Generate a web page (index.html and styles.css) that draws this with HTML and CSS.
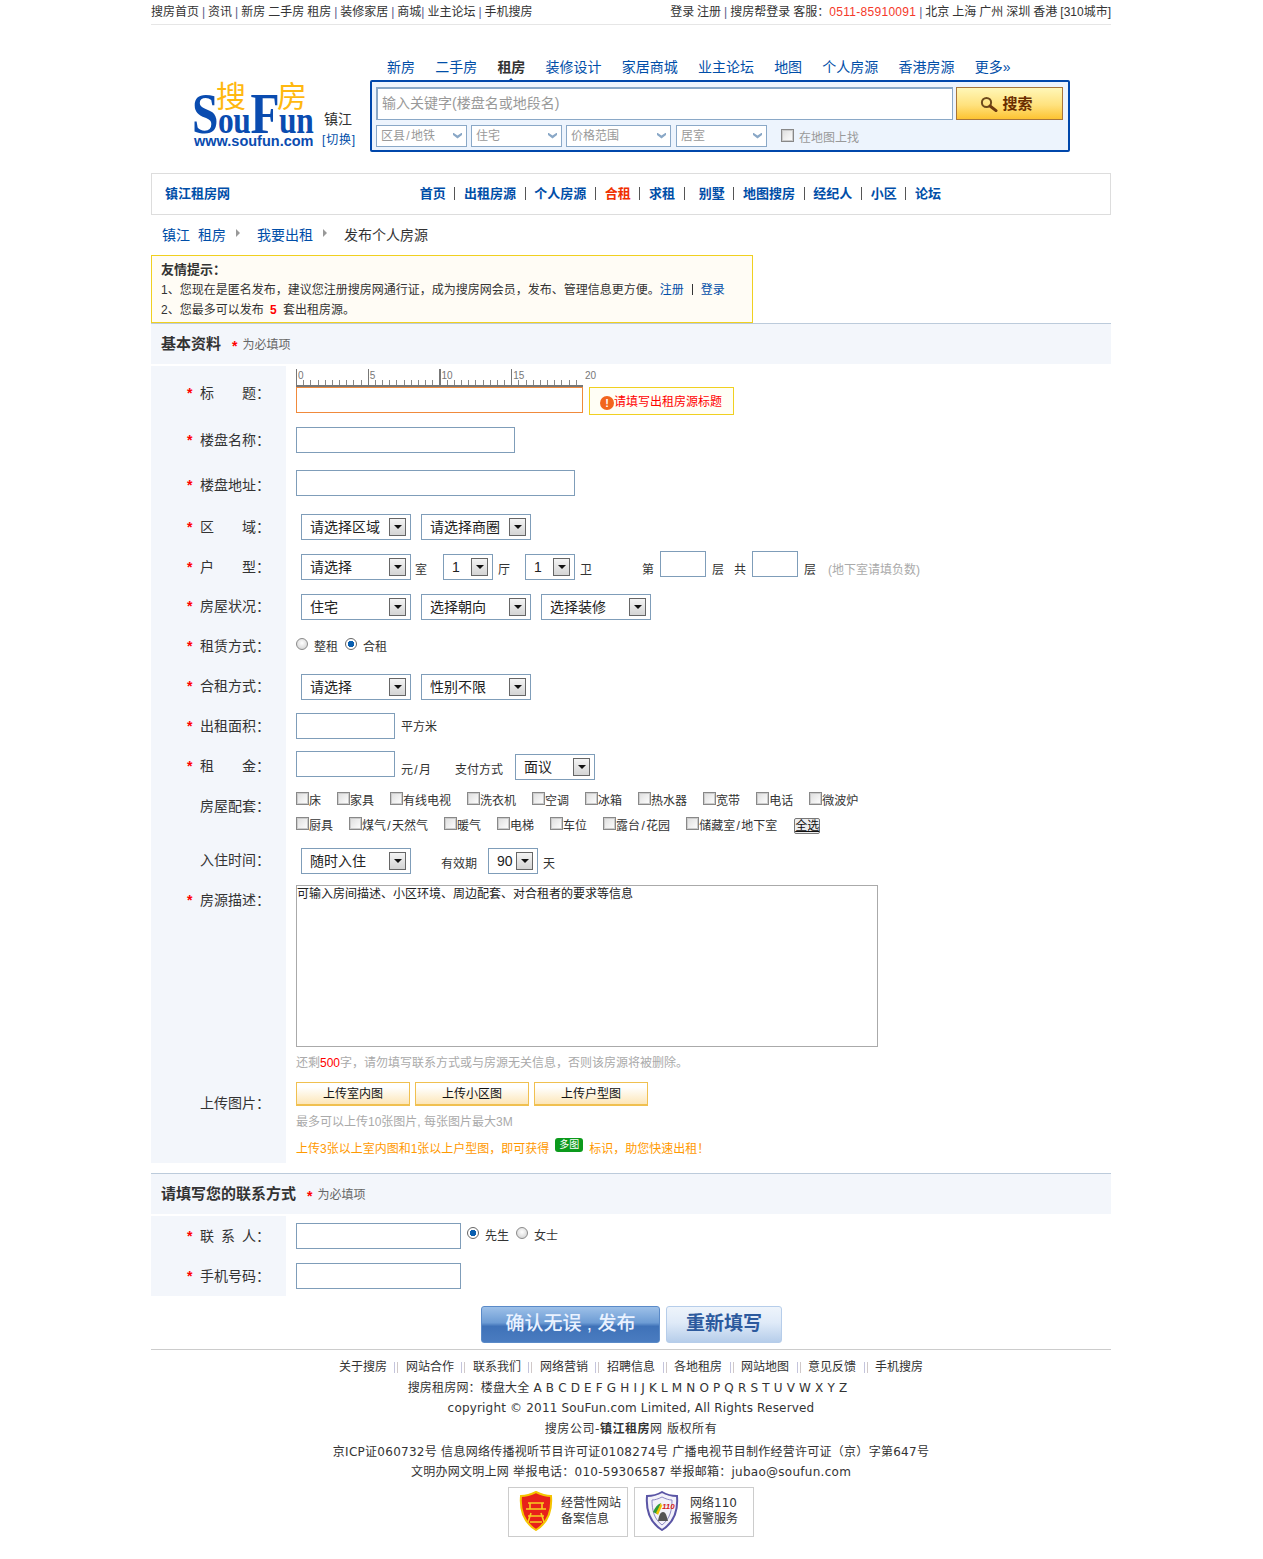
FILE: index.html
```html
<!DOCTYPE html>
<html lang="zh-CN">
<head>
<meta charset="utf-8">
<title>发布个人房源</title>
<link rel="stylesheet" href="styles.css">
</head>
<body>
<div class="page">
  <div class="top">
    <div>搜房首页 <b>|</b> 资讯 <b>|</b> 新房 二手房 租房 <b>|</b> 装修家居 <b>|</b> 商城<b>|</b> 业主论坛 <b>|</b> 手机搜房</div>
    <div>登录 注册 <b>|</b> 搜房帮登录 客服：<span class="phone">0511-85910091</span> <b>|</b> 北京 上海 广州 深圳 香港 [310城市]</div>
  </div>

  <div class="head">
    <div class="logobox">
      <div class="logo">
        <span class="lg-a">搜</span><span class="lg-b">房</span>
        <div class="lg-name"><span class="big">S</span>ou<span class="big">F</span>un</div>
        <div class="lg-url">www.soufun.com</div>
      </div>
      <div class="city"><span>镇江</span><a>[切换]</a></div>
    </div>
    <div class="searchcol">
      <div class="tabs">
        <a>新房</a><a>二手房</a><a class="on">租房</a><a>装修设计</a><a>家居商城</a><a>业主论坛</a><a>地图</a><a>个人房源</a><a>香港房源</a><a>更多»</a>
      </div>
      <div class="sbox">
        <div class="sline">
          <div class="kw">输入关键字(楼盘名或地段名)</div>
          <div class="sbtn">
            <svg width="18" height="16" viewBox="0 0 18 16"><circle cx="6.5" cy="6.5" r="4.6" fill="none" stroke="#6d4a1c" stroke-width="2"/><path d="M10 10l6 4.6" stroke="#6d3a10" stroke-width="3" stroke-linecap="round"/></svg>
            <span>搜索</span>
          </div>
        </div>
        <div class="sline2">
          <div class="ssel w91">区县<span class="sl">/</span>地铁<i></i></div>
          <div class="ssel w91">住宅<i></i></div>
          <div class="ssel w105">价格范围<i></i></div>
          <div class="ssel w91 mg">居室<i></i></div>
          <label class="onmap"><input type="checkbox" class="cb">在地图上找</label>
        </div>
      </div>
    </div>
  </div>

  <div class="subnav">
    <a class="sn-title">镇江租房网</a>
    <div class="sn-links">
      <a>首页</a><a>出租房源</a><a>个人房源</a><a class="red">合租</a><a>求租</a><a class="wide">别墅</a><a>地图搜房</a><a>经纪人</a><a>小区</a><a>论坛</a>
    </div>
  </div>

  <div class="crumb"><a>镇江</a><a class="c2">租房</a><i></i><a>我要出租</a><i></i><span>发布个人房源</span></div>

  <div class="notice">
    <p class="nt">友情提示：</p>
    <p>1、您现在是匿名发布，建议您注册搜房网通行证，成为搜房网会员，发布、管理信息更方便。<a>注册</a><span class="nbar"></span><a>登录</a></p>
    <p>2、您最多可以发布 <strong>5</strong> 套出租房源。</p>
  </div>

  <div class="sec"><h2>基本资料</h2><em>*</em><span>为必填项</span></div>

  <div class="form">
    <div class="row h51">
      <div class="lab dn2"><em>*</em>标　　题：</div>
      <div class="val top-v">
        <div class="titlewrap">
          <div class="ruler"><span>0</span><span>5</span><span>10</span><span>15</span><span>20</span></div>
          <div class="tin"></div>
        </div>
        <div class="tip"><i>!</i>请填写出租房源标题</div>
      </div>
    </div>
    <div class="row h46">
      <div class="lab dn"><em>*</em>楼盘名称：</div>
      <div class="val"><input class="in w219"></div>
    </div>
    <div class="row h44">
      <div class="lab dn"><em>*</em>楼盘地址：</div>
      <div class="val"><input class="in w279 lift4"></div>
    </div>
    <div class="row">
      <div class="lab dn"><em>*</em>区　　域：</div>
      <div class="val sels"><div class="sel w110">请选择区域<i></i></div><div class="sel w110">请选择商圈<i></i></div></div>
    </div>
    <div class="row">
      <div class="lab dn"><em>*</em>户　　型：</div>
      <div class="val sels">
        <div class="sel w110 n4">请选择<i></i></div><span class="u ml4">室</span>
        <div class="sel w50 n15 first">1<i></i></div><span class="u ml5">厅</span>
        <div class="sel w50 n15">1<i></i></div><span class="u ml5">卫</span>
        <span class="u ml50">第</span><input class="in w46 lift ml6">
        <span class="u ml6">层</span><span class="u ml10">共</span><input class="in w46 lift ml6">
        <span class="u ml6">层</span><span class="u ml12 gray">(地下室请填负数)</span>
      </div>
    </div>
    <div class="row">
      <div class="lab"><em>*</em>房屋状况：</div>
      <div class="val sels"><div class="sel w110">住宅<i></i></div><div class="sel w110">选择朝向<i></i></div><div class="sel w110">选择装修<i></i></div></div>
    </div>
    <div class="row">
      <div class="lab"><em>*</em>租赁方式：</div>
      <div class="val radios">
        <input type="radio" name="a" class="ra"><span>整租</span>
        <input type="radio" name="a" class="ra" checked><span>合租</span>
      </div>
    </div>
    <div class="row">
      <div class="lab"><em>*</em>合租方式：</div>
      <div class="val sels"><div class="sel w110">请选择<i></i></div><div class="sel w110">性别不限<i></i></div></div>
    </div>
    <div class="row">
      <div class="lab"><em>*</em>出租面积：</div>
      <div class="val"><input class="in w99 lift2"><span class="ml6">平方米</span></div>
    </div>
    <div class="row">
      <div class="lab"><em>*</em>租　　金：</div>
      <div class="val"><input class="in w99 lift"><span class="u ml6">元<span class="sl">/</span>月</span><span class="u ml24">支付方式</span><div class="sel w80 ml12">面议<i></i></div></div>
    </div>
    <div class="row h54">
      <div class="lab topl"><em class="blank"></em>房屋配套：</div>
      <div class="val cbs">
        <div class="cbrow">
          <label><input type="checkbox" class="cb">床</label><label><input type="checkbox" class="cb">家具</label><label><input type="checkbox" class="cb">有线电视</label><label><input type="checkbox" class="cb">洗衣机</label><label><input type="checkbox" class="cb">空调</label><label><input type="checkbox" class="cb">冰箱</label><label><input type="checkbox" class="cb">热水器</label><label><input type="checkbox" class="cb">宽带</label><label><input type="checkbox" class="cb">电话</label><label><input type="checkbox" class="cb">微波炉</label>
        </div>
        <div class="cbrow">
          <label><input type="checkbox" class="cb">厨具</label><label><input type="checkbox" class="cb">煤气<span class="sl">/</span>天然气</label><label><input type="checkbox" class="cb">暖气</label><label><input type="checkbox" class="cb">电梯</label><label><input type="checkbox" class="cb">车位</label><label><input type="checkbox" class="cb">露台<span class="sl">/</span>花园</label><label><input type="checkbox" class="cb">储藏室<span class="sl">/</span>地下室</label><span class="allbtn">全选</span>
        </div>
      </div>
    </div>
    <div class="row">
      <div class="lab"><em class="blank"></em>入住时间：</div>
      <div class="val sels"><div class="sel w110">随时入住<i></i></div><span class="u ml20">有效期</span><div class="sel w50 ml11 n90">90<i></i></div><span class="u ml5">天</span></div>
    </div>
    <div class="row desc">
      <div class="lab up2"><em>*</em>房源描述：</div>
      <div class="val col">
        <textarea class="ta" readonly>可输入房间描述、小区环境、周边配套、对合租者的要求等信息</textarea>
        <p class="hint">还剩<span>500</span>字，请勿填写联系方式或与房源无关信息，否则该房源将被删除。</p>
      </div>
    </div>
    <div class="row upl">
      <div class="lab up3"><em class="blank"></em>上传图片：</div>
      <div class="val col">
        <div class="ubtns"><span>上传室内图</span><span>上传小区图</span><span>上传户型图</span></div>
        <p class="hint h2">最多可以上传10张图片, 每张图片最大3M</p>
        <p class="promo">上传3张以上室内图和1张以上户型图，即可获得<span class="duotu">多图</span>标识，助您快速出租！</p>
      </div>
    </div>
  </div>

  <div class="sec sec2"><h2>请填写您的联系方式</h2><em>*</em><span>为必填项</span></div>
  <div class="form">
    <div class="row">
      <div class="lab dn"><em>*</em>联&ensp;系&ensp;人：</div>
      <div class="val radios"><input class="in w165 mr6"><input type="radio" name="g" class="ra" checked><span>先生</span><input type="radio" name="g" class="ra"><span>女士</span></div>
    </div>
    <div class="row">
      <div class="lab dn"><em>*</em>手机号码：</div>
      <div class="val"><input class="in w165"></div>
    </div>
  </div>

  <div class="actions"><a class="go">确认无误 , 发布</a><a class="reset">重新填写</a></div>

  <div class="foot">
    <div class="fl links"><a>关于搜房</a><i></i><a>网站合作</a><i></i><a>联系我们</a><i></i><a>网络营销</a><i></i><a>招聘信息</a><i></i><a>各地租房</a><i></i><a>网站地图</a><i></i><a>意见反馈</a><i></i><a>手机搜房</a></div>
    <div class="fl az">搜房租房网：楼盘大全 A B C D E F G H I J K L M N O P Q R S T U V W X Y Z</div>
    <div class="fl ls18">copyright © 2011 SouFun.com Limited, All Rights Reserved</div>
    <div class="fl ls55">搜房公司-<b>镇江租房</b>网 版权所有</div>
    <div class="fl ls lic">京ICP证060732号 信息网络传播视听节目许可证0108274号 广播电视节目制作经营许可证（京）字第647号</div>
    <div class="fl ls">文明办网文明上网 举报电话：010-59306587 举报邮箱：jubao@soufun.com</div>
    <div class="badges">
      <div class="badge">
        <svg width="34" height="40" viewBox="0 0 34 40"><path d="M17 1C11 4 6 5 2 5c-1 12 2 26 15 34C30 31 33 17 32 5c-4 0-9-1-15-4z" fill="#e8211a" stroke="#f5c400" stroke-width="2"/><path d="M9 12h16M7 18h20M11 12v6M23 12v6M9 25h16M12 22l-3 9M22 22l3 9M11 31h12" fill="none" stroke="#f5d020" stroke-width="1.6"/></svg>
        <div>经营性网站<br>备案信息</div>
      </div>
      <div class="badge b2">
        <svg width="34" height="40" viewBox="0 0 34 40"><path d="M17 1C12 4 6 5 2 5c-1 12 2 26 15 34C30 31 33 17 32 5c-4 0-10-1-15-4z" fill="#f3f2fa" stroke="#5a55a5" stroke-width="2"/><path d="M17 6c-4 2-7 3-10 3 0 10 2 19 10 25 8-6 10-15 10-25-3 0-6-1-10-3z" fill="none" stroke="#8d88c4"/><path d="M8 21c2-5 5-8 8-9l-4 11z" fill="#2f9a3a"/><path d="M11 22l5-10 1 3-4 9z" fill="#f2c200"/><path d="M13 30c1-5 2-9 5-9s4 5 5 9z" fill="#555"/><text x="17" y="18" class="t110">110</text></svg>
        <div>网络110<br>报警服务</div>
      </div>
    </div>
  </div>
</div>
</body>
</html>
```

FILE: styles.css
```css
* { box-sizing: border-box; }
html, body { margin: 0; padding: 0; background: #fff; }
body { font: 12px/20px "Liberation Sans", "Noto Sans CJK SC", sans-serif; color: #333; }
a { color: #004ea8; text-decoration: none; }
p, h2 { margin: 0; }
em, i { font-style: normal; }
.page { width: 960px; margin: 0 auto; position: relative; left: -.5px; height: 1559px; }
.sl { display: inline-block; width: 6px; text-align: center; }

.top { height: 25px; padding-top: 2px; display: flex; justify-content: space-between; border-bottom: 1px solid #e6e6e6; word-spacing: -.35px; }
.top b { font-weight: normal; color: #5a5a8a; }
.phone { color: #f5392a; letter-spacing: .3px; }

.head { height: 148px; display: flex; }
.logobox { width: 219px; position: relative; }
.logo { position: absolute; left: 42px; top: 55px; width: 125px; height: 70px; }
.lg-a, .lg-b { position: absolute; color: #ffb80f; font: 30px/32px "Noto Sans CJK SC", sans-serif; }
.lg-a { left: 23px; top: -2px; z-index: 1; }
.lg-b { left: 84px; top: -2px; z-index: 1; }
.lg-name { position: absolute; left: -1px; top: 12px; width: 150px; transform: scaleX(.85); transform-origin: left; font: bold 37px/44px "Liberation Serif", serif; color: #0a4cb0; white-space: nowrap; letter-spacing: -.5px; }
.lg-name .big { font-size: 56px; }
.lg-url { position: absolute; left: 1px; top: 53px; font: bold 14.5px/16px "Liberation Sans", sans-serif; color: #0a4cb0; white-space: nowrap; }
.city { position: absolute; left: 171px; top: 84px; width: 40px; display: flex; flex-direction: column; }
.city span { font-size: 14px; padding-left: 2px; line-height: 20px; }
.city a { line-height: 20px; margin-top: 1px; letter-spacing: .8px; white-space: nowrap; }

.searchcol { width: 700px; }
.tabs { height: 55px; padding: 32px 0 0 17px; display: flex; gap: 20.2px; font-size: 14px; line-height: 20px; white-space: nowrap; }
.tabs a.on { color: #333; font-weight: bold; position: relative; }
.tabs a.on::after { content: ""; position: absolute; left: 50%; margin-left: -4px; top: 21px; border: 4px solid transparent; border-top: 0; border-bottom-color: #0047ab; }
.sbox { height: 72px; border: 2px solid #0047ab; border-radius: 2px; background: #edf4fd; padding: 5px 5px 0 4px; }
.sline { display: flex; gap: 3px; }
.kw { width: 577px; height: 33px; border: 1px solid #8aa8c7; border-top-width: 2px; border-left-width: 2px; background: #fff; color: #999; font-size: 14px; line-height: 28px; padding-left: 4px; }
.sbtn { width: 107px; height: 33px; border: 1px solid #a8753a; background: linear-gradient(#fff7b8, #ffe27e 55%, #fdc332); display: flex; align-items: center; justify-content: center; gap: 4px; padding-right: 6px; color: #6a2e00; font-size: 15px; font-weight: bold; }
.sline2 { display: flex; margin-top: 3px; align-items: center; }
.ssel { height: 22px; border: 1px solid #8aa8c7; background: #fff; color: #999; line-height: 20px; padding-left: 4px; margin-right: 4px; position: relative; }
.ssel i { position: absolute; right: 4px; top: 7px; width: 9px; height: 6px; background: #8aa8c7; clip-path: polygon(0 0, 50% 50%, 100% 0, 100% 40%, 50% 100%, 0 40%); }
.w91 { width: 91px; } .w105 { width: 105px; }
.mg { margin-left: 1px; }
.onmap { display: flex; align-items: center; gap: 5px; color: #999; margin: 5px 0 0 10px; }

.subnav { height: 42px; border: 1px solid #ddd; display: flex; align-items: center; padding-left: 13px; font-size: 13px; font-weight: bold; }
.sn-title { width: 246px; }
.sn-links { display: flex; align-items: center; margin-top: -1px; }
.sn-links a { padding: 0 8.66px; line-height: 13px; border-left: 1px solid #555; white-space: nowrap; }
.sn-links a:first-child { border-left: 0; }
.sn-links a.red { color: #f03000; }
.sn-links a.wide { padding-left: 14px; }

.crumb { height: 40px; padding-left: 11px; display: flex; align-items: center; font-size: 14px; }
.crumb a.c2 { margin-left: 8px; }
.crumb i { margin: -4px 17px 0 10px; border: 4px solid transparent; border-right: 0; border-left-color: #999; }

.notice { width: 602px; height: 68px; border: 1px solid #f0d020; background: #fffcf5; padding: 4px 0 0 9px; line-height: 20px; position: relative; z-index: 1; }
.notice .nt { font-weight: bold; font-size: 13px; }
.notice strong { color: #f00; margin: 0 3px; }
.nbar { display: inline-block; width: 1px; height: 11px; background: #333; margin: 0 8px; vertical-align: -1px; }

.sec { height: 41px; border-top: 1px solid #bccbdb; background: #f3f6fb; display: flex; align-items: center; padding-left: 10px; margin-bottom: 2px; }
.sec h2 { font-size: 15px; color: #333; }
.sec em { color: #f00; font-size: 14px; font-weight: bold; margin: 3px 5px 0 11px; }
.sec span { color: #666; margin-top: 1px; }
.sec2 { margin-top: 10px; }

.row { display: flex; height: 40px; }
.h51 { height: 51px; } .h46 { height: 46px; } .h44 { height: 44px; } .h54 { height: 54px; }
.lab { width: 135px; flex: none; background: #f3f6fb; padding: 0 0 2px 36px; display: flex; align-items: center; font-size: 14px; white-space: nowrap; }
.lab em { width: 13px; color: #f00; font-size: 14px; font-weight: bold; }
.lab .blank { display: block; }
.lab.dn { padding-bottom: 0; }
.lab.dn2 { padding: 2px 0 0 36px; }
.lab.topl { align-items: flex-start; padding-top: 9px; }
.lab.up2 { align-items: flex-start; padding-top: 9px; }
.lab.up3 { align-items: flex-start; padding-top: 18px; }
.val { flex: 1; padding-left: 10px; display: flex; align-items: center; min-width: 0; white-space: nowrap; }
.top-v { align-items: flex-start; }
.col { flex-direction: column; align-items: flex-start; }

.titlewrap { width: 287px; padding-top: 3px; }
.ruler { height: 18px; width: 287px; display: flex; border-bottom: 2px solid #777; font-size: 10px; line-height: 14px; color: #777; padding-left: 2px;
  background: repeating-linear-gradient(90deg, #777 0 1px, transparent 1px 71.75px) 0 0 / 100% 100% no-repeat, repeating-linear-gradient(90deg, #888 0 1px, transparent 1px 7.175px) 0 100% / 100% 5px no-repeat; }
.ruler span { flex: 0 0 71.75px; }
.ruler span:last-child { flex: 0 0 0; }
.tin { height: 26px; border: 1px solid #f08a3c; background: #fff; }
.tip { margin: 21px 0 0 6px; width: 145px; height: 28px; border: 1px solid #f0d020; background: #fffef5; color: #f00; display: flex; align-items: center; padding: 1px 0 0 10px; }
.tip i { width: 14px; height: 14px; border-radius: 50%; background: #f2651d; color: #fff; font: bold 11px/14px "Liberation Sans", sans-serif; text-align: center; margin-top: 2px; }

.in { height: 26px; border: 1px solid #7f9db9; background: #fff; padding: 0; margin: 0; display: block; outline: 0; }
.w219 { width: 219px; } .w279 { width: 279px; } .w46 { width: 46px; } .w99 { width: 99px; } .w165 { width: 165px; }
.lift { margin-top: -6px; }
.lift2 { margin-top: -2px; }
.lift4 { margin-top: -4px; }

.sels { padding-left: 15px; }
.sel { height: 26px; border: 1px solid #7f9db9; background: #fff; font-size: 14px; line-height: 24px; color: #222; padding-left: 8px; position: relative; margin-right: 10px; flex: none; }
.sel i { position: absolute; right: 4px; top: 3px; width: 17px; height: 18px; border: 1px solid #666; background: linear-gradient(#f4f4f4, #d4d4d4); }
.sel i::after { content: ""; position: absolute; left: 4px; top: 6px; border: 4px solid transparent; border-bottom: 0; border-top-color: #111; }
.w110 { width: 110px; } .w50 { width: 50px; } .w80 { width: 80px; }
.n4, .n15, .n90 { margin-right: 0; }
.w50 { margin-left: 15px; }
.w50.first { margin-left: 16px; }
.ml4 { margin-left: 4px; } .ml5 { margin-left: 5px; } .ml6 { margin-left: 6px; } .ml10 { margin-left: 10px; } .ml12 { margin-left: 12px; } .ml20 { margin-left: 20px; } .ml24 { margin-left: 24px; } .ml50 { margin-left: 50px; }
.w50.ml11 { margin-left: 11px; }
.mr6 { margin-right: 6px; }
.u { margin-top: 6px; }
.gray { color: #aaa; }

.ra { appearance: none; -webkit-appearance: none; width: 12px; height: 12px; border-radius: 50%; border: 1px solid #8a8a8a; margin: -6px 0 0; padding: 0; flex: none; background: radial-gradient(circle at 50% 40%, #fff, #ccc); }
.ra:checked { background: radial-gradient(circle, #0a5fb0 0 3px, #fff 3.5px); border-color: #666; }
.radios span { margin: 0 7px 0 6px; }
.cb { appearance: none; -webkit-appearance: none; width: 13px; height: 13px; border: 1px solid #888; background: linear-gradient(135deg, #ddd, #fff); box-shadow: inset 0 0 0 1px #ccc; margin: -5px 0 0; padding: 0; flex: none; }
.cbs { flex-direction: column; align-items: flex-start; padding-top: 1px; justify-content: flex-start; }
.cbrow { display: flex; gap: 16px; height: 25px; align-items: center; }
.cbrow label { display: flex; align-items: center; }
.allbtn { border: 1px solid #777; border-radius: 2px; background: #eee; color: #111; width: 26px; height: 16px; line-height: 14px; text-align: center; margin-left: 1px; text-decoration: underline; }

.desc { height: 194px; }
.ta { width: 582px; height: 162px; border: 1px solid #aaa; padding: 0; margin: 4px 0 0; font: 12px/16px "Liberation Sans", "Noto Sans CJK SC", sans-serif; color: #222; resize: none; outline: 0; background: #fff; display: block; }
.hint { color: #aaa; margin-top: 6px; }
.hint span { color: #f00; }
.upl { height: 88px; }
.ubtns { display: flex; gap: 5px; margin-top: 7px; }
.ubtns span { width: 114px; height: 24px; border: 1px solid #f0c050; border-bottom-width: 2px; background: linear-gradient(#fff, #fff 20%, #fde6b8); color: #111; text-align: center; line-height: 22px; }
.promo { color: #f90; margin-top: 7px; display: flex; align-items: center; }
.duotu { width: 28px; height: 14px; background: #0c9a1c; color: #fff; border-radius: 3px; font-size: 10px; line-height: 14px; text-align: center; margin: -8px 6px 0 6px; }

.actions { display: flex; gap: 6px; padding: 10px 0 6px 330px; }
.actions a { height: 37px; border-radius: 3px; text-align: center; font-size: 19px; line-height: 34px; font-weight: 500; }
.go { width: 179px; background: linear-gradient(#9dc0e8, #6d9cd4 45%, #3f72b8 55%, #4a7cc0); color: #eaf2ff; border: 1px solid #5a8ac8; }
.actions .reset { width: 116px; background: linear-gradient(#eef4fb, #dfeaf8 45%, #b6cdea); color: #2c5a9e; border: 1px solid #b6cdea; font-weight: bold; }

.foot { border-top: 1px solid #ccc; padding-top: 7px; text-align: center; font-family: "DejaVu Sans", "Noto Sans CJK SC", sans-serif; font-size: 12px; }
.fl { height: 21px; line-height: 21px; white-space: nowrap; color: #333; }
.ls { letter-spacing: .27px; }
.ls18 { letter-spacing: .18px; }
.ls55 { letter-spacing: .55px; }
.az { letter-spacing: .17px; height: 20px; padding-right: 7px; }
.lic { margin-top: 2px; height: 20px; }
.links { display: flex; justify-content: center; align-items: center; }
.links a { color: #333; }
.links i { width: 4px; height: 11px; border-left: 1px solid #c4c4dc; border-right: 1px solid #d0c8c8; margin: 0 7.5px; }
.badges { display: flex; justify-content: center; gap: 6px; margin-top: 4px; }
.badge { width: 120px; height: 50px; border: 1px solid #ccc; display: flex; align-items: center; text-align: left; gap: 8px; padding: 0 0 2px 10px; line-height: 16px; }
.b2 { gap: 11px; }
.t110 { font: italic bold 8px "Liberation Sans", sans-serif; fill: #d8261c; }
```
